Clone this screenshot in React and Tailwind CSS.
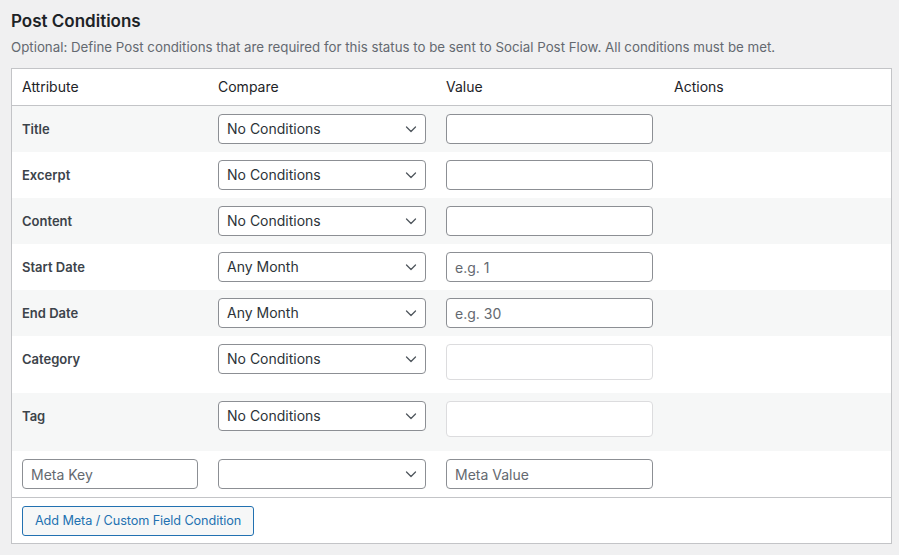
import React from 'react';

const Chevron = () => (
  <svg className="absolute right-[9px] top-1/2 -translate-y-1/2 pointer-events-none" width="12" height="12" viewBox="0 0 12 12" fill="none">
    <path d="M1.5 4l4.5 4.5L10.5 4" stroke="#50575e" strokeWidth="1.3" strokeLinecap="round" strokeLinejoin="round" />
  </svg>
);

const Select = ({ value, w = 'w-[208px]' }) => (
  <div className={`relative ${w} h-[30px]`}>
    <div className="h-full w-full rounded-[4px] border border-[#8c8f94] bg-white pl-[8px] text-[14px] leading-[28px] text-[#2c3338]">
      {value}
    </div>
    <Chevron />
  </div>
);

const Input = ({ placeholder, light, tall, w = 'w-[207px]' }) => (
  <input
    readOnly
    placeholder={placeholder}
    className={`${w} ${tall ? 'h-[36px]' : 'h-[30px]'} rounded-[4px] border ${light ? 'border-[#dcdcde]' : 'border-[#8c8f94]'} bg-white px-[8px] text-[14px] text-[#2c3338] placeholder:text-[#646970] outline-none`}
  />
);

const rows = [
  { label: 'Title', compare: 'No Conditions' },
  { label: 'Excerpt', compare: 'No Conditions' },
  { label: 'Content', compare: 'No Conditions' },
  { label: 'Start Date', compare: 'Any Month', placeholder: 'e.g. 1' },
  { label: 'End Date', compare: 'Any Month', placeholder: 'e.g. 30' },
  { label: 'Category', compare: 'No Conditions', light: true, h: 'h-[57px]' },
  { label: 'Tag', compare: 'No Conditions', light: true, h: 'h-[58px]' },
];

export default function App() {
  return (
    <div className="min-h-screen bg-[#f0f0f1] pl-[11px] pr-[8px] pt-[10px]" style={{ fontFamily: 'Inter, "Noto Sans", sans-serif' }}>
      <h2 className="h-[22px] text-[17px] font-semibold leading-[22px] text-[#1d2327]">Post Conditions</h2>
      <p className="mt-[5px] text-[13.3px] leading-[20px] text-[#646970]">
        Optional: Define Post conditions that are required for this status to be sent to Social Post Flow. All conditions must be met.
      </p>
      <div className="mt-[11px] w-[881px] border border-[#c3c4c7] bg-white">
        <div className="flex h-[37px] items-center border-b border-[#c3c4c7] pb-[1px] text-[14px] text-[#1d2327]">
          <div className="w-[196px] pl-[10px]">Attribute</div>
          <div className="w-[228px] pl-[10px]">Compare</div>
          <div className="w-[228px] pl-[10px]">Value</div>
          <div className="pl-[10px]">Actions</div>
        </div>
        {rows.map((r, i) => (
          <div
            key={r.label}
            className={`flex ${r.light ? `${r.h} items-start pt-[8px]` : 'h-[46px] items-center'} ${i % 2 === 0 ? 'bg-[#f6f7f7]' : 'bg-white'}`}
          >
            <div className={`w-[196px] pl-[10px] text-[13px] font-semibold text-[#3c434a] ${r.light ? 'leading-[30px]' : 'pt-[2px]'}`}>{r.label}</div>
            <div className="w-[228px] pl-[10px]">
              <Select value={r.compare} />
            </div>
            <div className="w-[228px] pl-[10px]">
              <Input placeholder={r.placeholder} light={r.light} tall={r.light} />
            </div>
          </div>
        ))}
        <div className="flex h-[47px] items-center border-b border-[#c3c4c7] bg-white">
          <div className="w-[196px] pl-[10px]">
            <Input placeholder="Meta Key" w="w-[176px]" />
          </div>
          <div className="w-[228px] pl-[10px]">
            <Select value="" />
          </div>
          <div className="w-[228px] pl-[10px]">
            <Input placeholder="Meta Value" />
          </div>
        </div>
        <div className="flex h-[45px] items-center pl-[10px]">
          <button className="h-[30px] w-[232px] whitespace-nowrap rounded-[3px] border border-[#2271b1] bg-[#f6f7f7] pt-[1px] text-[12.7px] tracking-[-0.1px] text-[#2271b1]">
            Add Meta / Custom Field Condition
          </button>
        </div>
      </div>
    </div>
  );
}
